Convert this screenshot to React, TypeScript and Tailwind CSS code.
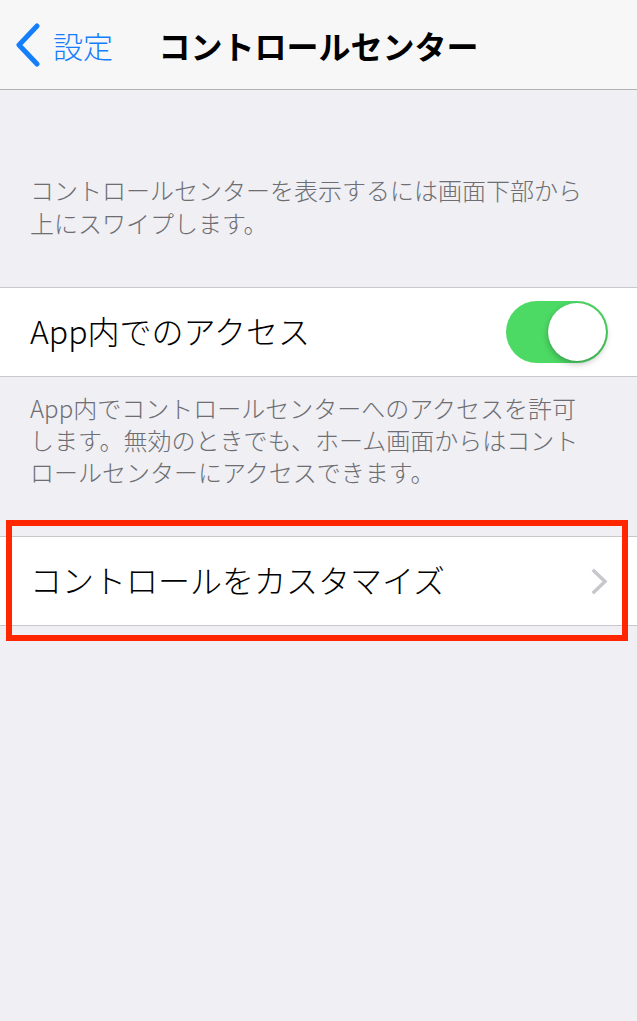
const font = { fontFamily: '"Noto Sans CJK JP", "Noto Sans", sans-serif' };

function NavBar() {
  return (
    <div className="relative flex h-[90px] items-center border-b border-[#b2b2b2] bg-[#f7f7f8]">
      <div className="absolute left-[15px] top-0 flex h-full items-center gap-[12px] text-[#157efb]">
        <svg width="26" height="44" viewBox="0 0 26 44" fill="none">
          <path d="M22 3 L4 22 L22 41" stroke="#157efb" strokeWidth="5" strokeLinecap="round" strokeLinejoin="round" />
        </svg>
        <span className="text-[30px] font-light leading-none">設定</span>
      </div>
      <h1 className="w-full text-center text-[32px] font-semibold leading-none text-black">
        コントロールセンター
      </h1>
    </div>
  );
}

function Toggle() {
  return (
    <div className="flex h-[62px] w-[102px] items-center justify-end rounded-full bg-[#4cd964] pr-[2px]">
      <div className="h-[58px] w-[58px] rounded-full bg-white shadow-[0_3px_6px_rgba(0,0,0,0.25),0_0_1px_rgba(0,0,0,0.2)]" />
    </div>
  );
}

export default function App() {
  return (
    <div className="relative min-h-[1021px] w-full bg-[#efeff4]" style={font}>
      <NavBar />

      <p className="px-[30px] pb-[48px] pt-[83px] text-[24px] font-light leading-[33px] text-[#6d6d72]">
        コントロールセンターを表示するには画面下部から
        <br />
        上にスワイプします。
      </p>

      <div className="flex h-[90px] items-center justify-between border-y border-[#c8c7cc] bg-white pl-[30px] pr-[29px]">
        <span className="pb-[5px] text-[32px] font-light leading-none text-black">App内でのアクセス</span>
        <Toggle />
      </div>

      <p className="px-[30px] pb-[48px] pt-[15px] text-[24px] font-light leading-[32px] text-[#6d6d72]">
        App内でコントロールセンターへのアクセスを許可
        <br />
        します。無効のときでも、ホーム画面からはコント
        <br />
        ロールセンターにアクセスできます。
      </p>

      <div className="flex h-[90px] items-center justify-between border-y border-[#c8c7cc] bg-white pl-[30px] pr-[29px]">
        <span className="pb-[5px] text-[32px] font-light leading-none text-black">コントロールをカスタマイズ</span>
        <svg width="17" height="27" viewBox="0 0 17 27" fill="none">
          <path d="M3 3 L14 13.5 L3 24" stroke="#c7c7cc" strokeWidth="3.5" strokeLinecap="square" />
        </svg>
      </div>

      <div className="pointer-events-none absolute left-[6px] top-[520px] h-[121px] w-[622px] border-[6px] border-[#ff2600]" />
    </div>
  );
}
